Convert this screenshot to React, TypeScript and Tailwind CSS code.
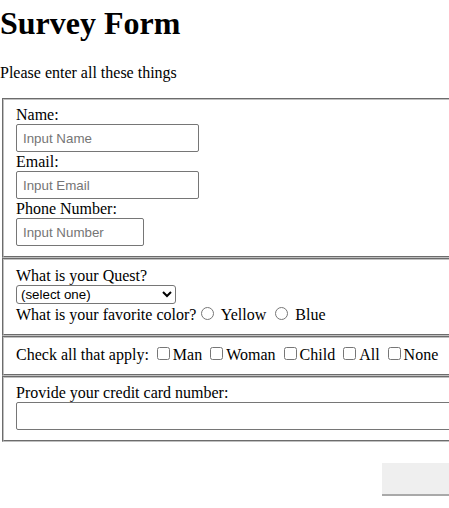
import React from 'react';

const fieldsetCls =
  'mx-[2px] border-2 [border-style:groove] border-[#c0c0c0] pt-[0.35em] px-[0.75em] pb-[0.625em] min-w-0';
const inputCls =
  'block h-[28px] border border-[#767676] rounded-[2px] bg-white px-[6px] text-[13.33px] font-["Liberation_Sans",Arial,sans-serif] text-black placeholder:text-[#757575] outline-none';
const radioCls = 'm-[3px_3px_0_5px] w-[13px] h-[13px] align-baseline';
const checkCls = 'm-[3px_3px_3px_4px] w-[13px] h-[13px] align-baseline';

const App: React.FC = () => {
  return (
    <div className="w-[449px] h-[508px] overflow-hidden bg-white text-black">
      <div className='w-[520px] font-["Liberation_Serif","Times_New_Roman",serif] text-[16px] leading-[19px]'>
        <h1 className="mt-[5px] mb-[21px] text-[32px] font-bold leading-[36.8px]">Survey Form</h1>
        <p className="mb-4">Please enter all these things</p>
        <form onSubmit={(e) => e.preventDefault()}>
          <fieldset className={fieldsetCls}>
            <label className="block">Name:</label>
            <input type="text" placeholder="Input Name" className={inputCls + ' w-[183px]'} />
            <label className="block">Email:</label>
            <input type="email" placeholder="Input Email" className={inputCls + ' w-[183px]'} />
            <label className="block">Phone Number:</label>
            <input type="tel" placeholder="Input Number" className={inputCls + ' w-[128px]'} />
          </fieldset>
          <fieldset className={fieldsetCls}>
            <label className="block">What is your Quest?</label>
            <select className='block w-[160px] h-[19px] py-0 border border-[#767676] rounded-[3px] bg-white text-[13.33px] leading-[normal] font-["Liberation_Sans",Arial,sans-serif]'>
              <option>(select one)</option>
              <option>To seek the Holy Grail</option>
            </select>
            <div>
              What is your favorite color?<input type="radio" name="color" className={radioCls} /> Yellow{' '}
              <input type="radio" name="color" className={radioCls} /> Blue
            </div>
          </fieldset>
          <fieldset className={fieldsetCls}>
            <div>
              Check all that apply: <input type="checkbox" className={checkCls} />Man{' '}
              <input type="checkbox" className={checkCls} />Woman{' '}
              <input type="checkbox" className={checkCls} />Child{' '}
              <input type="checkbox" className={checkCls} />All{' '}
              <input type="checkbox" className={checkCls} />None
            </div>
          </fieldset>
          <fieldset className={fieldsetCls}>
            <label className="block">Provide your credit card number:</label>
            <input type="text" className={inputCls + ' w-[480px] h-[27px]'} />
          </fieldset>
          <button
            type="submit"
            className="block ml-[382px] mt-[21px] w-[100px] h-[33px] bg-[#efefef] border-b-2 border-[#a9a9a9]"
          ></button>
        </form>
      </div>
    </div>
  );
};

export default App;
